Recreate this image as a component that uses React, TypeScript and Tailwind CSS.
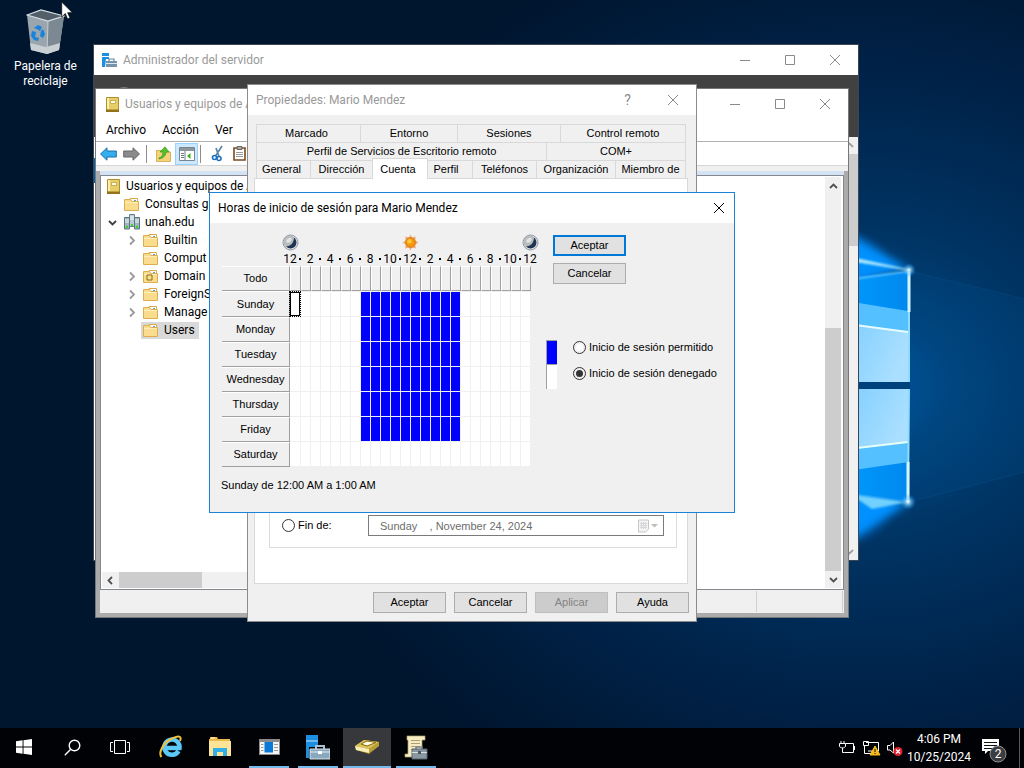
import type { ReactNode } from "react";

const uiFont = "font-[Roboto,'Noto_Sans',sans-serif]";
const dialogFont = "font-['Liberation_Sans',Arial,sans-serif]";

/* ---------- Wallpaper ---------- */

function Wallpaper() {
  return (
    <svg className="absolute inset-0 h-full w-full" viewBox="0 0 1024 768" preserveAspectRatio="xMidYMid slice" aria-hidden="true">
      <defs>
        <radialGradient id="base" gradientUnits="userSpaceOnUse" cx="860" cy="385" r="580" gradientTransform="translate(0 77) scale(1 0.8)">
          <stop offset="0" stopColor="#0058a4" />
          <stop offset="0.16" stopColor="#00437c" />
          <stop offset="0.35" stopColor="#003362" />
          <stop offset="0.65" stopColor="#00234a" />
          <stop offset="1" stopColor="#00152e" />
        </radialGradient>
        <radialGradient id="glow">
          <stop offset="0" stopColor="#0a9bff" />
          <stop offset="0.5" stopColor="#0079e0" stopOpacity="0.55" />
          <stop offset="1" stopColor="#0060b8" stopOpacity="0" />
        </radialGradient>
        <radialGradient id="spark">
          <stop offset="0" stopColor="#ffffff" />
          <stop offset="0.3" stopColor="#9fe0ff" stopOpacity="0.7" />
          <stop offset="1" stopColor="#1090ff" stopOpacity="0" />
        </radialGradient>
        <linearGradient id="paneTop" x1="0" x2="1" y1="0" y2="0.4">
          <stop offset="0" stopColor="#7bcdff" />
          <stop offset="1" stopColor="#aadfff" />
        </linearGradient>
        <linearGradient id="deep" x1="0" x2="1">
          <stop offset="0" stopColor="#009bff" />
          <stop offset="1" stopColor="#0088ee" />
        </linearGradient>
        <filter id="soft" x="-20%" y="-20%" width="140%" height="140%">
          <feGaussianBlur stdDeviation="4" />
        </filter>
        <filter id="fine" x="-20%" y="-20%" width="140%" height="140%">
          <feGaussianBlur stdDeviation="1" />
        </filter>
      </defs>
      <rect width="1024" height="768" fill="url(#base)" />
      <path d="M909 271 1024 300V472L909 502Z" fill="#00599f" opacity="0.12" />
      <path d="M909 271 1024 299M909 502 1024 472" stroke="#1672b8" strokeOpacity="0.2" />
      <ellipse cx="848" cy="262" rx="44" ry="32" fill="url(#glow)" opacity="0.8" />
      <ellipse cx="848" cy="512" rx="46" ry="36" fill="url(#glow)" opacity="0.85" />
      <path d="M840 228 909 269 840 285Z" fill="#0090ff" filter="url(#soft)" />
      <path d="M840 548 909 503 840 490Z" fill="#0090ff" filter="url(#soft)" />
      <path d="M840 279 909 271V382H840Z" fill="url(#deep)" />
      <path d="M840 300 908 311V382H840Z" fill="#55c0ff" />
      <path d="M840 323 908 332V382H840Z" fill="url(#paneTop)" />
      <path d="M840 323 908 332" stroke="#e6fbff" strokeWidth="2" />
      <path d="M840 389H909V502L840 494Z" fill="url(#deep)" />
      <path d="M840 389H909V462L840 472Z" fill="#55c0ff" />
      <path d="M840 389H909V442L840 450Z" fill="url(#paneTop)" />
      <path d="M840 450 908 442" stroke="#e6fff8" strokeWidth="2" />
      <rect x="840" y="382" width="70" height="7" fill="#00427c" />
      <path d="M840 255 909 270 858 262ZM840 281 909 271" stroke="#aee8ff" fill="#aee8ff" filter="url(#fine)" />
      <path d="M850 494 908 502 872 509Z" fill="#6fd0ff" filter="url(#fine)" />
      <path d="M909 271V382M909 389 908 502" stroke="#8fdcff" strokeWidth="2" />
      <path d="M909 272V312M908 462V502" stroke="#d3f5ff" strokeWidth="3" />
      <circle cx="909" cy="270" r="7" fill="url(#spark)" />
      <circle cx="908" cy="502" r="8" fill="url(#spark)" />
    </svg>
  );
}

/* ---------- Icons ---------- */

function RecycleBinIcon() {
  return (
    <svg width="40" height="46" viewBox="0 0 40 46" aria-hidden="true">
      <path d="M1 6 22 12 38 7 33 41 21 45 5 41Z" fill="#9aa5ae" />
      <path d="M22 12 38 7 33 41 21 45Z" fill="#7d8992" />
      <path d="M1 6 15 1 38 7 22 12Z" fill="#525e6a" stroke="#d9e0e5" strokeWidth="1.2" />
      <path d="M4 34 20 38 34 34 33 41 21 45 5 41Z" fill="#c9cfd3" />
      <path d="M22 12 21 45" stroke="#c7cfd5" />
      <path d="M8 19 12 16 16 18 14 22 11 20ZM17 20 19 25 17 29 14 27 15 22ZM6 22 10 23 9 28 13 29 12 32 8 31 5 27Z" fill="#1683dd" />
    </svg>
  );
}

function Pointer() {
  return (
    <svg width="12" height="19" viewBox="0 0 12 19" aria-hidden="true">
      <path d="M.7 1V16L4.300 12.600 6.600 18 9 17 6.700 11.700H11.400Z" fill="#fff" stroke="#111" strokeWidth="0.8" />
    </svg>
  );
}

function ServerIcon({ big = false }: { big?: boolean }) {
  return (
    <svg width={big ? 24 : 15} height={big ? 26 : 15} viewBox={big ? "0 0 24 26" : "0 0 15 15"} aria-hidden="true">
      {big ? (
        <>
          <path d="M0 1H12V24H0Z" fill="#1e8fe0" />
          <path d="M0 7H12" stroke="#bfe2fa" />
          <path d="M3 13H24V25H3Z" fill="#000" />
          <path d="M10 15V12H18V15" fill="none" stroke="#a9c0d0" strokeWidth="2" />
          <path d="M4 15H24V25H4Z" fill="#8aa9bf" stroke="#dbe6ee" />
          <path d="M4 18H24" stroke="#e5eef4" />
          <path d="M12 17H16V20H12Z" fill="#fff" />
        </>
      ) : (
        <>
          <path d="M0 0H7V3H0Z" fill="#1e8fe0" />
          <path d="M0 4H7V6H4L3 14H0Z" fill="#1e8fe0" />
          <path d="M7 8V6H12V8" fill="none" stroke="#65889f" strokeWidth="1.2" />
          <path d="M4 8H15V14H4Z" fill="#7594aa" />
          <path d="M4 10.500H15" stroke="#dbe6ee" />
        </>
      )}
    </svg>
  );
}

function BookIcon() {
  return (
    <svg className="shrink-0" width="13" height="15" viewBox="0 0 13 15" aria-hidden="true">
      <path d="M.5 .5H12.500V14.500H.5Z" fill="#e6cf68" stroke="#b08f2c" />
      <path d="M1 1H3V12H1Z" fill="#fbefb0" />
      <path d="M4.500 3.500H9.500V6.500H4.500Z" fill="#fffbe0" stroke="#b79a42" strokeWidth="0.7" />
      <path d="M0 12.500H13V15H0Z" fill="#94721c" />
    </svg>
  );
}

function FolderIcon({ marked = false }: { marked?: boolean }) {
  return (
    <svg className="shrink-0" width="15" height="13" viewBox="0 0 15 13" aria-hidden="true">
      <path d="M6 .5H13.500V4H6Z" fill="#fff" stroke="#d9aa45" />
      <path d="M10 2.500H12" stroke="#4da3e0" />
      <path d="M.5 1.500H6.500L8 3.500H14.500V12.500H.5Z" fill="#f9dc8e" stroke="#dcae4e" />
      <path d="M1 4.500H14" stroke="#fff0b8" />
      {marked && <path d="M4 5H9V10H4Z" fill="#f6e38c" stroke="#8d6b12" />}
    </svg>
  );
}

function DomainIcon() {
  return (
    <svg className="shrink-0" width="16" height="16" viewBox="0 0 16 16" aria-hidden="true">
      <path d="M5.500 .5H10.500V12.500H5.500Z" fill="#b9cdd6" stroke="#6a8290" />
      <path d="M.5 3.500H5.500V15H.5ZM10.500 3.500H15.500V15H10.500Z" fill="#9fb6c1" stroke="#5d7480" />
      <path d="M6 3H10M6 5H10M1 6H5M1 8H5M11 6H15M11 8H15" stroke="#f0f7fa" />
      <path d="M2 12H4V14H2ZM7 10H9V12H7ZM12 12H14V14H12Z" fill="#37d61e" />
    </svg>
  );
}

function Chevron({ dir, className }: { dir: "up" | "down" | "left" | "right"; className: string }) {
  const d = { up: "M2 7 5.500 3.500 9 7", down: "M2 4 5.500 7.500 9 4", left: "M7 2 3.500 5.500 7 9", right: "M4 1.500 8 5.500 4 9.500" }[dir];
  return (
    <svg className={`shrink-0 ${className}`} width="11" height="11" viewBox="0 0 11 11" aria-hidden="true">
      <path d={d} fill="none" stroke="currentColor" strokeWidth="1.8" />
    </svg>
  );
}

function ArrowIcon({ flip, fill, edge }: { flip?: boolean; fill: string; edge: string }) {
  return (
    <svg width="17" height="14" viewBox="0 0 17 14" aria-hidden="true">
      <path d={flip ? "M16.500 7 10 .8V4H.7V10H10V13.200Z" : "M.5 7 7 .8V4H16.300V10H7V13.200Z"} fill={fill} stroke={edge} />
    </svg>
  );
}

function MoonIcon() {
  return (
    <svg width="17" height="17" viewBox="0 0 17 17" aria-hidden="true">
      <circle cx="8.500" cy="8.500" r="7.500" fill="#dfe1e4" stroke="#8d97a8" />
      <circle cx="8.500" cy="8.500" r="6" fill="#223252" />
      <path d="M12 3.500A6 6 0 1 0 3.500 12.500C8 13 12 9 12 3.500Z" fill="#b9bcbd" />
      <path d="M4 6 8 3.500 10 5 8 8 5 9Z" fill="#e4e5e5" />
    </svg>
  );
}

function SunIcon() {
  return (
    <svg width="17" height="17" viewBox="0 0 17 17" aria-hidden="true">
      <path d="M8.500 .5 10 3.500 13.800 2.500 13.300 6.500 16.500 8.500 13.300 10.500 13.800 14.500 10 13.500 8.500 16.500 7 13.500 3.200 14.500 3.700 10.500 .5 8.500 3.700 6.500 3.200 2.500 7 3.500Z" fill="#f0ac78" />
      <circle cx="8.500" cy="8.500" r="4.800" fill="#f59a0c" stroke="#d87512" />
      <circle cx="7.500" cy="7.200" r="2.300" fill="#ffc637" />
    </svg>
  );
}

/* ---------- Window parts ---------- */

function CaptionButtons({ kinds, tone, size = "w-[45px]" }: { kinds: ("min" | "max" | "close" | "help")[]; tone: string; size?: string }) {
  return (
    <div className={`flex pr-px ${tone}`}>
      {kinds.map((kind) => (
        <button key={kind} type="button" aria-label={kind} className={`flex h-[30px] items-center justify-center ${size}`}>
          {kind === "help" ? (
            <span className="text-sm">?</span>
          ) : (
            <svg width="12" height="12" viewBox="0 0 12 12" fill="none" stroke="currentColor" aria-hidden="true">
              {kind === "min" && <path d="M1 6.500H11" />}
              {kind === "max" && <path d="M1.500 1.500H10.500V10.500H1.500Z" />}
              {kind === "close" && <path d="M1 1 11 11M11 1 1 11" />}
            </svg>
          )}
        </button>
      ))}
    </div>
  );
}

function PushButton({ children, disabled, primary }: { children: ReactNode; disabled?: boolean; primary?: boolean }) {
  const look = disabled
    ? "border border-[#bfbfbf] bg-[#cccccc] text-[#838383]"
    : primary
      ? "border-2 border-[#0078d7] bg-[#e1e1e1]"
      : "border border-[#adadad] bg-[#e1e1e1]";
  return (
    <button type="button" disabled={disabled} className={`flex h-[21px] w-[73px] items-center justify-center ${look}`}>
      {children}
    </button>
  );
}

function Radio({ name, label, checked, id }: { name: string; label: string; checked?: boolean; id: string }) {
  return (
    <div className="flex h-[14px] items-center gap-[3px]">
      <input
        id={id}
        type="radio"
        name={name}
        defaultChecked={checked}
        className="h-[13px] w-[13px] appearance-none rounded-full border border-[#333333] bg-white bg-clip-content p-[2px] checked:bg-[#333333]"
      />
      <label htmlFor={id}>{label}</label>
    </div>
  );
}

/* ---------- Server manager ---------- */

function ServerManagerWindow() {
  return (
    <section className={`absolute top-11 left-[93px] flex h-[517px] w-[766px] flex-col border border-[#3c4654] bg-white text-xs ${uiFont}`}>
      <header className="flex h-[30px] items-center justify-between pl-2 text-[#999999]">
        <div className="flex items-center gap-[6px]">
          <ServerIcon />
          <h1>Administrador del servidor</h1>
        </div>
        <CaptionButtons kinds={["min", "max", "close"]} tone="text-[#8a8a8a]" />
      </header>
      <div className="h-[62px] overflow-hidden bg-[#414141] pt-3 pl-[18px]">
        <div className="h-6 w-6 rounded-full bg-[#7a7a7a]" />
      </div>
      <div className="flex flex-1">
        <div className="flex-1 pt-[21px]">
          <div className="h-[25px] w-[30px] bg-[#0063b1]" />
        </div>
        <div className="flex w-[17px] flex-col items-center bg-[#f0f0f0] text-[#a0a0a0]">
          <Chevron dir="up" className="my-[3px]" />
          <div className="h-[92px] w-full bg-[#cdcdcd]" />
          <Chevron dir="down" className="mt-auto mb-[3px]" />
        </div>
      </div>
    </section>
  );
}

/* ---------- Users and computers ---------- */

const treeChildren: { name: string; open?: boolean; marked?: boolean; selected?: boolean }[] = [
  { name: "Builtin", open: true },
  { name: "Comput" },
  { name: "Domain", open: true, marked: true },
  { name: "ForeignS", open: true },
  { name: "Manage", open: true },
  { name: "Users", selected: true },
];

function DirectoryTree() {
  return (
    <ul className="w-full whitespace-nowrap text-black">
      <li className="flex h-[18px] items-center gap-[6px] pl-[5px]">
        <BookIcon />
        Usuarios y equipos de A
      </li>
      <li className="flex h-[18px] items-center gap-[6px] pl-[22px]">
        <FolderIcon />
        Consultas g
      </li>
      <li className="flex h-[18px] items-center pl-[5px]">
        <Chevron dir="down" className="mr-[6px] text-[#404040]" />
        <DomainIcon />
        <span className="ml-[5px]">unah.edu</span>
      </li>
      {treeChildren.map((node) => (
        <li key={node.name} className="flex h-[18px] items-center pl-6">
          <span className="w-[15px]">{node.open && <Chevron dir="right" className="text-[#9a9a9a]" />}</span>
          <span className={`flex h-[17px] items-center gap-[6px] px-[2px] pr-1 ${node.selected ? "bg-[#d9d9d9]" : ""}`}>
            <FolderIcon marked={node.marked} />
            {node.name}
          </span>
        </li>
      ))}
    </ul>
  );
}

function UsersWindow() {
  return (
    <section className={`absolute top-[88px] left-[95px] flex h-[530px] w-[754px] flex-col border border-[#777777] bg-white text-xs ${uiFont}`}>
      <header className="flex h-[30px] items-center justify-between pl-[10px] text-[#999999]">
        <div className="flex items-center gap-[6px]">
          <BookIcon />
          <h2>Usuarios y equipos de A</h2>
        </div>
        <CaptionButtons kinds={["min", "max", "close"]} tone="text-[#8a8a8a]" />
      </header>
      <nav className="flex h-[23px] items-center gap-4 border-b border-[#b0b0b0] pl-[10px] text-black">
        <button type="button">Archivo</button>
        <button type="button">Acción</button>
        <button type="button">Ver</button>
      </nav>
      <div className="flex h-[24px] items-center border-b border-[#d5d5d5] pl-1">
        <button type="button" aria-label="Atrás">
          <ArrowIcon fill="#35aef0" edge="#1d6fa8" />
        </button>
        <button type="button" aria-label="Adelante" className="ml-[6px]">
          <ArrowIcon flip fill="#8b8b8b" edge="#666666" />
        </button>
        <span className="ml-[6px] h-[18px] w-px bg-[#8d8d8d]" />
        <button type="button" aria-label="Subir" className="ml-[9px]">
          <svg width="15" height="16" viewBox="0 0 15 16" aria-hidden="true">
            <path d="M.5 4.500H6L7 6H14.500V15.500H.5Z" fill="#f3d27b" stroke="#d9b25a" />
            <path d="M3 12C6 11 7 9 7 6H4L9 .8 13 6H10C10 9 8 12 3 13Z" fill="#52c32b" stroke="#2c8d17" strokeWidth="0.6" />
          </svg>
        </button>
        <button type="button" aria-label="Árbol de consola" className="ml-[4px] flex h-[22px] w-[23px] items-center justify-center border border-[#99d1ff] bg-[#cce8ff]">
          <svg width="16" height="14" viewBox="0 0 16 14" aria-hidden="true">
            <path d="M.5 .5H15.500V13.500H.5Z" fill="#fff" stroke="#7c858c" />
            <path d="M1 1H15V4H1Z" fill="#8c969d" />
            <path d="M6 4V13M2 6.500H5M2 8.500H5M2 10.500H5" stroke="#6f7a82" />
            <path d="M11.500 6V12L8 9Z" fill="#3fae22" />
          </svg>
        </button>
        <span className="ml-[2px] h-[18px] w-px bg-[#8d8d8d]" />
        <button type="button" aria-label="Cortar" className="ml-[10px]">
          <svg width="13" height="17" viewBox="0 0 13 17" fill="none" aria-hidden="true">
            <path d="M11 1 4.500 11M5 3 8 11.500" stroke="#5e86a8" strokeWidth="1.7" />
            <circle cx="3.500" cy="12.500" r="2" stroke="#1b6fc0" strokeWidth="1.600" />
            <circle cx="8" cy="13.500" r="2" stroke="#1b6fc0" strokeWidth="1.600" />
          </svg>
        </button>
        <button type="button" aria-label="Pegar" className="ml-[9px]">
          <svg width="13" height="15" viewBox="0 0 13 15" aria-hidden="true">
            <path d="M1 2H12V14H1Z" fill="#fff" stroke="#7b4a1e" strokeWidth="1.600" />
            <path d="M4 .5H9V3.500H4Z" fill="#a7a7a7" stroke="#666" />
            <path d="M3 6.500H10M3 8.500H10M3 10.500H10" stroke="#9a9a9a" />
          </svg>
        </button>
      </div>
      <div className="h-[5px] bg-[#f0f0f0]" />
      <div className="flex flex-1 flex-col border-4 border-t-0 border-[#ababab]">
        <div className="h-1 bg-[#d3e3f3]" />
        <div className="flex flex-1 justify-between border border-[#828790] p-px">
          <div className="flex w-[146px] flex-col justify-between">
            <DirectoryTree />
            <div className="flex h-4 items-center bg-[#f0f0f0]">
              <Chevron dir="left" className="mx-[3px] text-[#505050]" />
              <div className="h-full w-[83px] bg-[#cdcdcd]" />
            </div>
          </div>
          <div className="mr-px flex w-4 flex-col items-center bg-[#f0f0f0] text-[#505050]">
            <Chevron dir="up" className="mt-1" />
            <div className="mt-auto h-[243px] w-full bg-[#cdcdcd]" />
            <Chevron dir="down" className="my-[3px]" />
          </div>
        </div>
        <footer className="flex h-[23px] justify-end bg-[#f0f0f0] p-px">
          <span className="w-[87px] border-x border-[#d0d0d0]" />
        </footer>
      </div>
    </section>
  );
}

/* ---------- Properties ---------- */

function Tab({ children, className }: { children: ReactNode; className: string }) {
  return (
    <button type="button" role="tab" className={`flex h-[18px] items-center justify-center border-t border-l border-[#d9d9d9] whitespace-nowrap ${className}`}>
      {children}
    </button>
  );
}

function PropertiesWindow() {
  return (
    <section className={`absolute top-[84px] left-[247px] flex h-[538px] w-[450px] flex-col border border-[#8c8c8c] bg-[#f0f0f0] text-[11px] text-black ${dialogFont}`}>
      <header className={`flex h-[30px] items-center justify-between bg-white pl-2 text-xs text-[#999999] ${uiFont}`}>
        <h2>Propiedades: Mario Mendez</h2>
        <CaptionButtons kinds={["help", "close"]} tone="text-[#8a8a8a]" />
      </header>
      <div className="flex flex-1 flex-col pt-[9px] pr-2 pb-2 pl-[6px]">
        <div role="tablist" className="px-[2px]">
          <div className="flex border-r border-[#d9d9d9]">
            <Tab className="w-[104px] pr-1">Marcado</Tab>
            <Tab className="w-[97px]">Entorno</Tab>
            <Tab className="w-[103px]">Sesiones</Tab>
            <Tab className="flex-1">Control remoto</Tab>
          </div>
          <div className="flex border-r border-[#d9d9d9]">
            <Tab className="w-[290px]">Perfil de Servicios de Escritorio remoto</Tab>
            <Tab className="flex-1">COM+</Tab>
          </div>
          <div className="flex border-r border-[#d9d9d9]">
            <Tab className="w-[54px] pr-1">General</Tab>
            <Tab className="w-[62px]">Dirección</Tab>
            <button type="button" role="tab" aria-selected="true" className="z-10 -mt-[2px] -mb-px flex h-[21px] w-[56px] items-center justify-center border border-b-0 border-[#d9d9d9] bg-white pr-1">
              Cuenta
            </button>
            <Tab className="w-[44px] border-l-0 pr-2">Perfil</Tab>
            <Tab className="w-[64px]">Teléfonos</Tab>
            <Tab className="w-[79px]">Organización</Tab>
            <Tab className="flex-1">Miembro de</Tab>
          </div>
        </div>
        <div className="flex flex-1 flex-col justify-end border border-[#d9d9d9] bg-white pr-[10px] pb-[35px] pl-[14px]">
          <div className="flex h-[120px] items-end border border-[#dcdcdc] pb-[11px] pl-3">
            <div className="flex h-[21px] w-[86px] items-center">
              <Radio name="expires" id="expires-on" label="Fin de:" />
            </div>
            <div className="relative flex h-[21px] w-[296px] items-center">
              <input aria-label="Fecha" disabled defaultValue="Sunday    , November 24, 2024" className="h-full w-full border border-[#7a7a7a] bg-white pl-[11px] whitespace-pre text-[#6d6d6d]" />
              <svg className="absolute right-[5px]" width="22" height="14" viewBox="0 0 22 14" aria-hidden="true">
                <path d="M1.500 1H11.500V10L8.500 13H1.500Z" fill="#f4f4f4" stroke="#c6c6c6" />
                <path d="M3 4.500H10M3 6.500H10M3 8.500H10M4.500 3V10M6.500 3V10M8.500 3V10" stroke="#d2d2d2" strokeWidth="0.800" />
                <path d="M14 5H21L17.500 8.500Z" fill="#bcc0b4" />
              </svg>
            </div>
          </div>
        </div>
        <div className="-mr-px mt-2 flex justify-end gap-2">
          <PushButton>Aceptar</PushButton>
          <PushButton>Cancelar</PushButton>
          <PushButton disabled>Aplicar</PushButton>
          <PushButton>Ayuda</PushButton>
        </div>
      </div>
    </section>
  );
}

/* ---------- Logon hours ---------- */

const hours = Array.from({ length: 24 }, (_, i) => i);
const days = ["Sunday", "Monday", "Tuesday", "Wednesday", "Thursday", "Friday", "Saturday"];
const scale = ["12", "2", "4", "6", "8", "10", "12", "2", "4", "6", "8", "10", "12"];

function isAllowed(day: number, hour: number) {
  return day < 6 && hour >= 7 && hour < 17;
}

function HoursGrid() {
  return (
    <div className="w-[320px]">
      <div className="flex justify-between pr-[2px] pl-[61px]">
        <MoonIcon />
        <SunIcon />
        <MoonIcon />
      </div>
      <div className="flex h-[15px] items-center pl-[64px] text-xs">
        {scale.map((label, i) => (
          <div key={i} className={`flex ${uiFont}`}>
            <span className="flex w-[10px] justify-center whitespace-nowrap">{label}</span>
            {i < scale.length - 1 && (
              <span className="flex w-[10px] items-center justify-center">
                <span className="h-[2px] w-[2px] bg-black" />
              </span>
            )}
          </div>
        ))}
      </div>
      <table className="ml-px table-fixed border-separate border-spacing-0">
        <thead>
          <tr className="h-[25px]">
            <th scope="col" className="w-[68px] border-t border-r border-b border-t-white border-r-[#a0a0a0] border-b-[#a0a0a0] p-0 font-normal">
              <button type="button">Todo</button>
            </th>
            {hours.map((h) => (
              <th
                key={h}
                scope="col"
                aria-label={`${h}:00`}
                className={`border-t border-r border-b border-l border-t-white border-r-[#a0a0a0] border-b-[#a0a0a0] border-l-white p-0 ${h === 0 ? "w-[11px]" : "w-[10px]"}`}
              />
            ))}
          </tr>
        </thead>
        <tbody>
          {days.map((day, d) => (
            <tr key={day} className={d === 0 ? "h-[26px]" : "h-[25px]"}>
              <th scope="row" className="border-t border-r border-b border-t-white border-r-[#a0a0a0] border-b-[#a0a0a0] p-0 font-normal">
                <button type="button">{day}</button>
              </th>
              {hours.map((h) => (
                <td
                  key={h}
                  className={`border-r border-b border-[#f0f0f0] p-0 ${d === 0 ? "border-t" : ""} ${isAllowed(d, h) ? "bg-[#0000ff]" : "bg-white"}`}
                >
                  {d === 0 && h === 0 && <span className="block h-6 border border-black outline-1 outline-black outline-dotted" />}
                </td>
              ))}
            </tr>
          ))}
        </tbody>
      </table>
    </div>
  );
}

function LogonHoursWindow() {
  return (
    <section className={`absolute top-48 left-[209px] flex h-[321px] w-[526px] flex-col border border-[#1883d7] bg-[#f0f0f0] text-[11px] text-black ${dialogFont}`}>
      <header className={`flex h-[30px] items-center justify-between bg-white pl-2 text-xs ${uiFont}`}>
        <h2>Horas de inicio de sesión para Mario Mendez</h2>
        <CaptionButtons kinds={["close"]} tone="text-black" size="w-7" />
      </header>
      <div className="flex flex-1 pt-[11px] pl-[11px]">
        <div className="flex flex-col">
          <HoursGrid />
          <p className="mt-[10px]">Sunday de 12:00 AM a 1:00 AM</p>
        </div>
        <div className="flex flex-col pt-px">
          <div className="flex flex-col gap-[7px] pl-3">
            <PushButton primary>Aceptar</PushButton>
            <PushButton>Cancelar</PushButton>
          </div>
          <div className="mt-14 flex pl-[5px]">
            <div className="h-[49px] w-[11px] border-t border-l border-[#a0a0a0] bg-white">
              <div className="h-6 border-b border-[#a0a0a0] bg-[#0000ff]" />
            </div>
            <div className="flex flex-col gap-3 pl-4">
              <Radio name="logon" id="logon-allowed" label="Inicio de sesión permitido" />
              <Radio name="logon" id="logon-denied" label="Inicio de sesión denegado" checked />
            </div>
          </div>
        </div>
      </div>
    </section>
  );
}

/* ---------- Taskbar ---------- */

function TaskButton({ label, open, active, children }: { label: string; open?: boolean; active?: boolean; children: ReactNode }) {
  return (
    <button type="button" aria-label={label} className={`flex h-10 w-12 flex-col items-center ${active ? "bg-[#37383b]" : ""}`}>
      <span className="flex flex-1 items-center">{children}</span>
      <span className={`h-[2px] ${open ? "bg-[#76b9ed]" : ""} ${active ? "w-full" : "w-10"}`} />
    </button>
  );
}

function Taskbar() {
  return (
    <footer className={`relative flex h-10 bg-[#010205] text-xs text-white ${uiFont}`}>
      <div className="flex">
        <TaskButton label="Inicio">
          <svg width="16" height="16" viewBox="0 0 16 16" fill="#fff" aria-hidden="true">
            <path d="M0 2.200 6.600 1.300V7.500H0ZM7.500 1.200 16 0V7.500H7.500ZM0 8.400H6.600V14.700L0 13.800ZM7.500 8.400H16V16L7.500 14.800Z" />
          </svg>
        </TaskButton>
        <TaskButton label="Buscar">
          <svg width="17" height="17" viewBox="0 0 17 17" fill="none" stroke="#fff" strokeWidth="1.400" aria-hidden="true">
            <circle cx="10.500" cy="6.500" r="5.300" />
            <path d="M6.700 10.300.8 16.200" />
          </svg>
        </TaskButton>
        <TaskButton label="Vista de tareas">
          <svg width="20" height="14" viewBox="0 0 20 14" fill="none" stroke="#fff" aria-hidden="true">
            <path d="M4.500 .5H15.500V13.500H4.500ZM3 2.500H.5V11.500H3M17 2.500H19.500V11.500H17" />
          </svg>
        </TaskButton>
      </div>
      <div className="ml-[3px] flex gap-px">
        <TaskButton label="Internet Explorer">
          <svg width="24" height="24" viewBox="0 0 24 24" fill="none" aria-hidden="true">
            <path d="M19.500 16A7.600 7.600 0 1 1 20.500 13H7.500" stroke="#5cc8f5" strokeWidth="4.500" />
            <path d="M2.500 22C-1 18 4 8 12 4S23 1 21 6" stroke="#f2c13a" strokeWidth="2" />
          </svg>
        </TaskButton>
        <TaskButton label="Explorador de archivos">
          <svg width="22" height="20" viewBox="0 0 22 20" aria-hidden="true">
            <path d="M0 2H1V0H8L9 2H21V19H0Z" fill="#e9b94c" />
            <path d="M0 4H22V19H0Z" fill="#ffe397" />
            <path d="M4 19V11H18V19H14V15H8V19Z" fill="#31aee8" />
            <path d="M2 1H6" stroke="#fff" />
          </svg>
        </TaskButton>
        <TaskButton label="Panel" open>
          <svg width="21" height="16" viewBox="0 0 21 16" aria-hidden="true">
            <path d="M0 0H21V16H0Z" fill="#8a8a8a" />
            <path d="M1 3H20V15H1Z" fill="#f4f4f4" />
            <path d="M5.500 3H14V13.500H5.500Z" fill="#0a78d6" />
            <path d="M2 5.500H4.500M2 8.500H4.500M2 11.500H4.500M15 5.500H19M15 8.500H19M15 11.500H19" stroke="#9a9a9a" />
          </svg>
        </TaskButton>
        <TaskButton label="Administrador del servidor" open>
          <ServerIcon big />
        </TaskButton>
        <TaskButton label="Usuarios y equipos" open active>
          <svg width="24" height="16" viewBox="0 0 24 16" aria-hidden="true">
            <path d="M0 7 9 1 24 3V7L14 15 1 11Z" fill="#a68a26" />
            <path d="M0 7 9 1 24 3 14 10Z" fill="#d9c257" />
            <path d="M0 7 14 10V14L1 11Z" fill="#f6efb8" />
            <path d="M14 10 24 3V7L14 14Z" fill="#b8a03a" />
            <path d="M6 5 12 2 21 3.500 12 7Z" fill="#fffde6" stroke="#8a6c12" />
          </svg>
        </TaskButton>
        <TaskButton label="Directiva" open>
          <svg width="24" height="25" viewBox="0 0 24 25" aria-hidden="true">
            <path d="M3 1H21V5H18V22H1V19H4V5H3Z" fill="#f5ebc4" stroke="#b5a26a" strokeWidth="0.700" />
            <path d="M7 5.500H16M7 8.500H16M7 11.500H16M7 14.500H12" stroke="#b09e70" />
            <path d="M12 14V12H18V14" fill="none" stroke="#78858d" strokeWidth="1.500" />
            <path d="M8 14H23V24H8Z" fill="#8a98a1" stroke="#56636c" />
            <path d="M8 17.500H23" stroke="#d8e0e4" />
            <path d="M14 16H17V19H14Z" fill="#4b555c" />
          </svg>
        </TaskButton>
      </div>
      <div className="ml-auto flex items-center">
        <svg width="66" height="18" viewBox="0 0 66 18" fill="none" stroke="#fff" aria-hidden="true">
          <path d="M6.500 4.500H14.500V13.500H5.500M15.500 7V11" />
          <path d="M.5 4.500H6.500V7C6.500 9.500 .5 9.500 .5 7ZM2 4V2M5 4V2M3.500 9V13.500H5.500" />
          <path d="M27 3.500H39.500V12H29M24.500 2.500H29.500V6.500H24.500ZM25.500 6.500V14.500H32M33 12V15" />
          <path d="M36 7 41 16H31Z" fill="#f8b91c" stroke="#f8b91c" />
          <path d="M36 10V13M36 14V15" stroke="#111" />
          <path d="M48.500 6.500H51L54.500 3V14L51 11H48.500Z" />
          <circle cx="59" cy="12.500" r="4.500" fill="#e0202b" stroke="none" />
          <path d="M57 10.500 61 14.500M61 10.500 57 14.500" strokeWidth="1.200" />
        </svg>
        <time className="ml-1 flex w-[60px] flex-col items-center leading-[18px] whitespace-nowrap">
          <span>4:06 PM</span>
          <span>10/25/2024</span>
        </time>
        <button type="button" aria-label="Notificaciones" className="ml-3 flex">
          <svg width="26" height="30" viewBox="0 0 26 30" aria-hidden="true">
            <path d="M1 6H18V18H7L4 21V18H1Z" fill="#fff" />
            <path d="M3 9.500H16M3 12.500H16M3 15.500H11" stroke="#111" />
            <circle cx="17" cy="21" r="8" fill="#3c3d40" stroke="#8b8c8e" />
            <text x="17" y="25" textAnchor="middle" fontSize="12" fill="#fff">
              2
            </text>
          </svg>
        </button>
        <span className="ml-3 h-10 w-px bg-[#55585c]" />
        <span className="w-1" />
      </div>
    </footer>
  );
}

export default function App() {
  return (
    <div className="relative flex min-h-screen flex-col overflow-hidden bg-[#00142b]">
      <Wallpaper />
      <main className="relative flex-1">
        <button type="button" className={`absolute top-[9px] left-2 flex w-[75px] flex-col items-center gap-1 text-xs leading-[15px] text-white ${uiFont}`}>
          <RecycleBinIcon />
          <span>Papelera de reciclaje</span>
        </button>
        <ServerManagerWindow />
        <UsersWindow />
        <PropertiesWindow />
        <LogonHoursWindow />
        <div className="absolute top-px left-[61px]">
          <Pointer />
        </div>
      </main>
      <Taskbar />
    </div>
  );
}
